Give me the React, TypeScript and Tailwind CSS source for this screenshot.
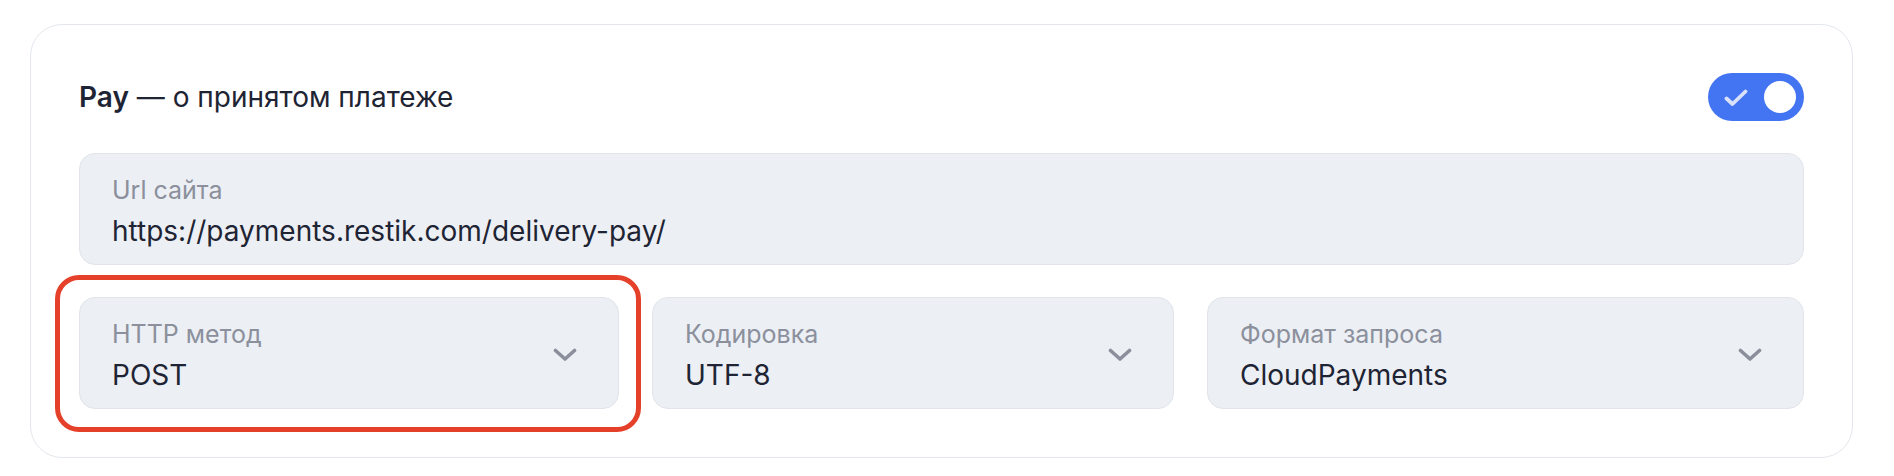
import { useState } from "react";

const SELECTS = [
    { label: "HTTP метод", value: "POST", width: "w-[540px]", marked: true },
    { label: "Кодировка", value: "UTF-8", width: "w-[522px]", marked: false },
    { label: "Формат запроса", value: "CloudPayments", width: "flex-1", marked: false },
];

function Chevron() {
    return (
        <svg width="24" height="13" viewBox="0 0 24 13" fill="none" className="shrink-0">
            <path d="M2.5 2.5l9.5 8.5 9.5-8.5" stroke="#8A8F9B" strokeWidth="3.6" strokeLinecap="round" strokeLinejoin="round" />
        </svg>
    );
}

function Field({ label, value, chevron }: { label: string; value: string; chevron?: boolean }) {
    return (
        <div className="flex h-[112px] items-start justify-between rounded-2xl border border-[#E1E5EB] bg-[#ECEFF4] pl-8 pr-[41px] pt-[21px]">
            <div className="min-w-0">
                <div className="text-[25px] leading-[30px] text-[#8B909C]">{label}</div>
                <div className="mt-[9px] text-[28px] leading-[34px] text-[#1E2433]">{value}</div>
            </div>
            {chevron && (
                <div className="mt-[29px]">
                    <Chevron />
                </div>
            )}
        </div>
    );
}

export default function App() {
    const [enabled, setEnabled] = useState(true);

    return (
        <div className="bg-white pl-[30px] pt-[24px] font-['Inter',sans-serif]">
            <div className="w-[1823px] rounded-[32px] border border-[#E3E7EC] bg-white p-12">
                <div className="flex h-12 items-center justify-between">
                    <h3 className="text-[28px] text-[#1E2433]">
                        <span className="font-semibold">Pay</span> — о принятом платеже
                    </h3>
                    <button
                        onClick={() => setEnabled(!enabled)}
                        className="flex h-12 w-24 items-center justify-between rounded-full bg-[#4374F2] pl-4 pr-2"
                        aria-label="Включено"
                    >
                        <svg width="24" height="17" viewBox="0 0 24 17" fill="none">
                            <path d="M2.5 9.5l6 5.5L21.5 2.5" stroke="#D9E1FB" strokeWidth="3.8" strokeLinecap="round" strokeLinejoin="round" />
                        </svg>
                        <span className="h-8 w-8 rounded-full bg-white" />
                    </button>
                </div>

                <div className="mt-8">
                    <Field label="Url сайта" value="https://payments.restik.com/delivery-pay/" />
                </div>

                <div className="mt-8 flex gap-[33px]">
                    {SELECTS.map((s) => (
                        <div key={s.label} className={`relative ${s.width}`}>
                            <Field label={s.label} value={s.value} chevron />
                            {s.marked && (
                                <div className="pointer-events-none absolute -top-[22px] -right-[22px] -bottom-[23px] -left-[24px] rounded-[24px] border-[5px] border-[#E5412A]" />
                            )}
                        </div>
                    ))}
                </div>
            </div>
        </div>
    );
}
